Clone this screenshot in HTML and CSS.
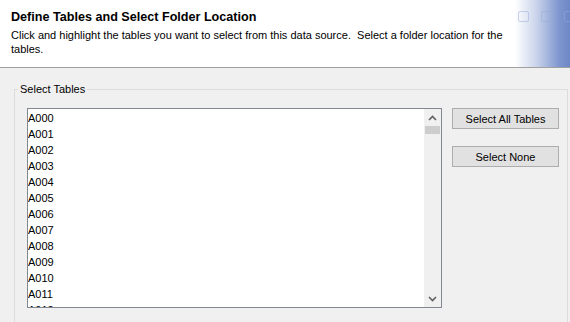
FILE: index.html
```html
<!DOCTYPE html>
<html>
<head>
<meta charset="utf-8">
<link rel="stylesheet" href="styles.css">
</head>
<body>
<div class="header">
  <div class="intro">
    <div class="title">Define Tables and Select Folder Location</div>
    <div class="desc">Click and highlight the tables you want to select from this data source.&nbsp; Select a folder location for the tables.</div>
  </div>
  <div class="banner">
    <span class="sq"></span><span class="sq"></span><span class="sq"></span>
  </div>
</div>
<div class="body">
  <fieldset class="group">
    <legend>Select Tables</legend>
    <div class="group-row">
      <div class="listbox">
        <ul class="items">
          <li>A000</li><li>A001</li><li>A002</li><li>A003</li><li>A004</li><li>A005</li><li>A006</li><li>A007</li><li>A008</li><li>A009</li><li>A010</li><li>A011</li><li>A012</li><li>A013</li>
        </ul>
        <div class="scrollbar">
          <div class="arrow"><svg width="9" height="6" viewBox="0 0 9 6"><path d="M1 5 L4.5 1.5 L8 5" fill="none" stroke="#606060" stroke-width="1.6"/></svg></div>
          <div class="thumb"></div>
          <div class="track"></div>
          <div class="arrow"><svg width="9" height="6" viewBox="0 0 9 6"><path d="M1 1 L4.5 4.5 L8 1" fill="none" stroke="#606060" stroke-width="1.6"/></svg></div>
        </div>
      </div>
      <div class="buttons">
        <button class="btn">Select All Tables</button>
        <button class="btn">Select None</button>
      </div>
    </div>
  </fieldset>
</div>
</body>
</html>
```
FILE: styles.css
```css
html, body {
  margin: 0;
  padding: 0;
}
body {
  width: 570px;
  height: 322px;
  overflow: hidden;
  background: #f0f0f0;
  font-family: "Liberation Sans", Arial, sans-serif;
  font-size: 11px;
  color: #000;
}
.header {
  display: flex;
  height: 67px;
  background: #fff;
  border-bottom: 1px solid #a0a0a0;
}
.intro {
  flex: 1;
  padding: 10px 0 0 11px;
}
.title {
  font-weight: bold;
  font-size: 12.6px;
  line-height: 15px;
}
.desc {
  margin-top: 3px;
  line-height: 14px;
  width: 500px;
}
.banner {
  width: 52px;
  display: flex;
  align-items: flex-start;
  gap: 12px;
  padding: 11px 0 0 3px;
  background: linear-gradient(to right, #ffffff 0%, #c8d2ea 40%, #7f97cf 80%, #6d87c6 100%);
}
.sq {
  flex: none;
  width: 9px;
  height: 9px;
  border: 1px solid rgba(150, 170, 215, 0.5);
  border-radius: 2px;
}
.body {
  height: 254px;
  box-sizing: border-box;
  overflow: hidden;
  padding: 15px 2px 0 14px;
}
.group {
  margin: 0;
  padding: 12px 8px 0 12px;
  border: 1px solid #dcdcdc;
  border-bottom: none;
  height: 226px;
}
.group legend {
  padding: 0 2px;
  margin-left: -9px;
  line-height: 13px;
}
.group-row {
  display: flex;
  gap: 10px;
  align-items: flex-start;
}
.listbox {
  display: flex;
  width: 413px;
  height: 198px;
  border: 1px solid #828790;
  background: #fff;
  overflow: hidden;
}
.items {
  flex: 1;
  list-style: none;
  margin: 0;
  padding: 1px 0 0 0;
}
.items li {
  height: 16px;
  line-height: 16px;
}
.scrollbar {
  width: 17px;
  display: flex;
  flex-direction: column;
  background: #f0f0f0;
}
.arrow {
  height: 17px;
  display: flex;
  align-items: center;
  justify-content: center;
}
.thumb {
  height: 8px;
  margin: 0 1px;
  background: #cdcdcd;
}
.track {
  flex: 1;
}
.buttons {
  display: flex;
  flex-direction: column;
  gap: 17px;
}
.btn {
  width: 107px;
  height: 21px;
  margin: 0;
  padding: 0;
  font: inherit;
  color: #000;
  background: #e1e1e1;
  border: 1px solid #adadad;
}
```
